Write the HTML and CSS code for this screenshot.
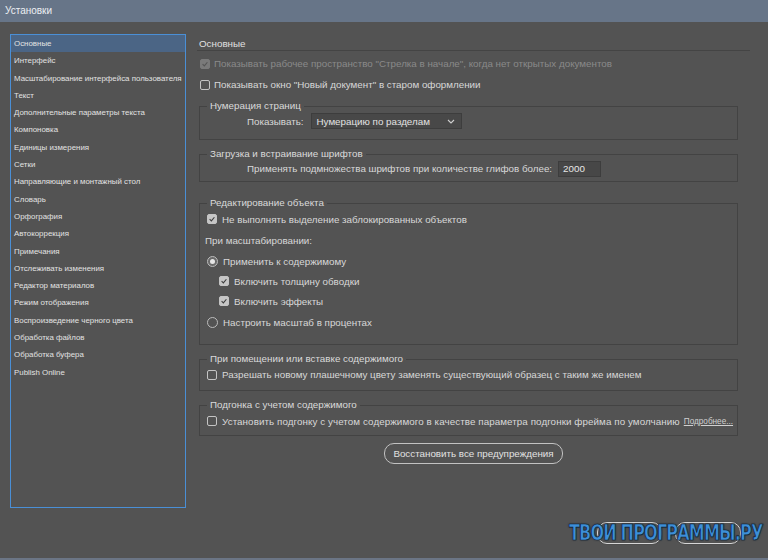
FILE: index.html
```html
<!DOCTYPE html>
<html lang="ru">
<head>
<meta charset="utf-8">
<title>Установки</title>
<link rel="stylesheet" href="styles.css">
</head>
<body>
<div class="titlebar">Установки</div>
<div class="window">
  <ul class="sidebar">
    <li class="active">Основные</li>
    <li>Интерфейс</li>
    <li>Масштабирование интерфейса пользователя</li>
    <li>Текст</li>
    <li>Дополнительные параметры текста</li>
    <li>Компоновка</li>
    <li>Единицы измерения</li>
    <li>Сетки</li>
    <li>Направляющие и монтажный стол</li>
    <li>Словарь</li>
    <li>Орфография</li>
    <li>Автокоррекция</li>
    <li>Примечания</li>
    <li>Отслеживать изменения</li>
    <li>Редактор материалов</li>
    <li>Режим отображения</li>
    <li>Воспроизведение черного цвета</li>
    <li>Обработка файлов</li>
    <li>Обработка буфера</li>
    <li>Publish Online</li>
  </ul>
  <main class="main">
    <div class="heading">Основные</div>
    <div class="row top disabled"><span class="cb on dis"><svg viewBox="0 0 10 10"><path d="M2 5.2 L4.2 7.3 L8 2.8" /></svg></span>Показывать рабочее пространство "Стрелка в начале", когда нет открытых документов</div>
    <div class="row top"><span class="cb"></span>Показывать окно "Новый документ" в старом оформлении</div>

    <fieldset class="group g1">
      <legend>Нумерация страниц</legend>
      <div class="field-row">
        <span class="label">Показывать:</span>
        <div class="select">Нумерацию по разделам<svg class="chev" viewBox="0 0 8 5"><path d="M1 1 L4 4 L7 1"/></svg></div>
      </div>
    </fieldset>

    <fieldset class="group g2">
      <legend>Загрузка и встраивание шрифтов</legend>
      <div class="field-row">
        <span class="label">Применять подмножества шрифтов при количестве глифов более:</span>
        <div class="input">2000</div>
      </div>
    </fieldset>

    <fieldset class="group g3">
      <legend>Редактирование объекта</legend>
      <div class="row r1"><span class="cb on"><svg viewBox="0 0 10 10"><path d="M2 5.2 L4.2 7.3 L8 2.8" /></svg></span>Не выполнять выделение заблокированных объектов</div>
      <div class="row r2 sub-label">При масштабировании:</div>
      <div class="row r3"><span class="radio on"></span>Применить к содержимому</div>
      <div class="row r4 indent"><span class="cb on"><svg viewBox="0 0 10 10"><path d="M2 5.2 L4.2 7.3 L8 2.8" /></svg></span>Включить толщину обводки</div>
      <div class="row r5 indent"><span class="cb on"><svg viewBox="0 0 10 10"><path d="M2 5.2 L4.2 7.3 L8 2.8" /></svg></span>Включить эффекты</div>
      <div class="row r6"><span class="radio"></span>Настроить масштаб в процентах</div>
    </fieldset>

    <fieldset class="group g4">
      <legend>При помещении или вставке содержимого</legend>
      <div class="row r7"><span class="cb"></span>Разрешать новому плашечному цвету заменять существующий образец с таким же именем</div>
    </fieldset>

    <fieldset class="group g5">
      <legend>Подгонка с учетом содержимого</legend>
      <div class="row r8"><span class="cb"></span><span class="long">Установить подгонку с учетом содержимого в качестве параметра подгонки фрейма по умолчанию</span><a class="more">Подробнее...</a></div>
    </fieldset>

    <div class="actions"><button class="btn">Восстановить все предупреждения</button></div>
  </main>
</div>
<div class="bottomline"></div>
<div class="watermark">
  <span class="pill p1"></span><span class="pill p2"></span>
  <span class="wm-text">ТВОИ ПРОГРАММЫ.РУ</span>
</div>
</body>
</html>
```
FILE: styles.css
```css
html, body {
  margin: 0;
  padding: 0;
}
body {
  width: 768px;
  height: 560px;
  overflow: hidden;
  background: #535353;
  font-family: "Liberation Sans", Arial, sans-serif;
  font-size: 9.8px;
  color: #d8d8d8;
  display: flex;
  flex-direction: column;
  position: relative;
}
.titlebar {
  height: 22px;
  line-height: 21px;
  background: #677588;
  color: #eceff3;
  padding-left: 5px;
  font-size: 10px;
  flex: none;
}
.window {
  flex: 1;
  display: flex;
  align-items: flex-start;
}
.sidebar {
  list-style: none;
  margin: 12px 0 0 10px;
  padding: 0;
  width: 174px;
  height: 472px;
  border: 1px solid #4a8fd6;
  box-sizing: content-box;
  font-size: 7.9px;
  color: #e2e2e2;
}
.sidebar li {
  height: 17.3px;
  line-height: 17.3px;
  padding-left: 3px;
  white-space: nowrap;
}
.sidebar li.active {
  background: #4b6585;
}
.main {
  margin-left: 11px;
  width: 553px;
}
.heading {
  margin-top: 15px;
  height: 13px;
  line-height: 13px;
  padding-left: 2px;
  border-bottom: 1px solid #444444;
  color: #e0e0e0;
}
.row {
  display: flex;
  align-items: center;
  white-space: nowrap;
}
.row.top {
  height: 21px;
  padding-left: 3px;
}
.heading + .row {
  margin-top: 2px;
}
.disabled {
  color: #8a8a8a;
}
.cb {
  width: 8px;
  height: 8px;
  border: 1px solid #c4c4c4;
  border-radius: 2px;
  margin-right: 4px;
  flex: none;
  display: flex;
  align-items: center;
  justify-content: center;
}
.cb svg {
  width: 10px;
  height: 10px;
  fill: none;
  stroke: #3e3e3e;
  stroke-width: 1.4;
}
.cb.on {
  background: #c6c6c6;
}
.cb.dis {
  background: #7a7a7a;
  border-color: #7a7a7a;
}
.cb.dis svg {
  stroke: #555555;
}
.radio {
  width: 9px;
  height: 9px;
  border: 1px solid #bcbcbc;
  border-radius: 50%;
  margin-right: 5px;
  flex: none;
  position: relative;
}
.radio.on::after {
  content: "";
  position: absolute;
  left: 2px;
  top: 2px;
  width: 5px;
  height: 5px;
  border-radius: 50%;
  background: #e6e6e6;
}
.radio.on {
  background: #6a6a6a;
}
.group {
  margin: 0 12px 0 2px;
  border: 1px solid #434343;
  padding: 0 0 0 7px;
  min-width: 0;
}
.group legend {
  padding: 0 3px;
  line-height: 12px;
  font-size: 9.8px;
  color: #dadada;
}
.g1 { margin-top: 5px; padding-bottom: 9px; }
.g2 { margin-top: 8px; padding-bottom: 4px; }
.g3 { margin-top: 15px; padding-bottom: 10px; }
.g4 { margin-top: 8px; padding-bottom: 6px; }
.g5 { margin-top: 8px; padding-bottom: 4px; }
.field-row {
  display: flex;
  align-items: center;
  padding-left: 40px;
  white-space: nowrap;
}
.g1 .field-row { height: 18px; }
.g2 .field-row { height: 17px; }
.select {
  margin-left: 7px;
  width: 151px;
  height: 16px;
  box-sizing: border-box;
  border: 1px solid #3d3d3d;
  background: #484848;
  padding: 0 6px 0 5px;
  display: flex;
  align-items: center;
  justify-content: space-between;
  color: #e2e2e2;
}
.chev {
  width: 8px;
  height: 5px;
  fill: none;
  stroke: #cfcfcf;
  stroke-width: 1.1;
}
.input {
  margin-left: 6px;
  width: 43px;
  height: 16px;
  box-sizing: border-box;
  border: 1px solid #3d3d3d;
  background: #474747;
  padding-left: 4px;
  line-height: 14px;
  color: #e6e6e6;
}
.g3 .cb, .g4 .cb, .g5 .cb { margin-right: 5px; }
.r1 { height: 20px; }
.r2 { height: 22px; margin-left: -2px; }
.r3 { height: 20px; }
.r4 { height: 20px; }
.r5 { height: 20px; }
.r6 { height: 23px; }
.r7 { height: 19px; }
.r8 { height: 20px; }
.indent { padding-left: 12px; }
.long {
  letter-spacing: 0.08px;
}
.more {
  font-size: 8.2px;
  text-decoration: underline;
  margin-left: 4px;
  color: #d0d0d0;
}
.actions {
  display: flex;
  justify-content: center;
  margin-top: 7px;
}
.btn {
  height: 21px;
  width: 179px;
  border: 1px solid #c2c2c2;
  border-radius: 10px;
  background: #535353;
  color: #e2e2e2;
  font-family: "Liberation Sans", Arial, sans-serif;
  font-size: 9.8px;
  padding: 0;
}
.bottomline {
  height: 2px;
  background: #6b7585;
  flex: none;
}
.watermark {
  position: absolute;
  left: 569px;
  top: 520px;
  width: 197px;
  height: 25px;
}
.pill {
  position: absolute;
  top: 2px;
  height: 20px;
  border: 1px solid #d6d6d6;
  border-radius: 10px;
  box-shadow: 0 0 1px #222;
}
.p1 { left: 28px; width: 63px; }
.p2 { left: 106px; width: 64px; }
.wm-text {
  position: absolute;
  left: 0;
  top: 1px;
  font-family: "DejaVu Sans Condensed", "DejaVu Sans", sans-serif;
  font-weight: bold;
  font-size: 21px;
  letter-spacing: -1px;
  line-height: 25px;
  color: #3d8fd8;
  white-space: nowrap;
  transform: scaleX(0.85);
  transform-origin: left center;
  -webkit-text-stroke: 0.7px #0d2238;
  text-shadow: 0 0 2px #0d1a2a;
}
```
